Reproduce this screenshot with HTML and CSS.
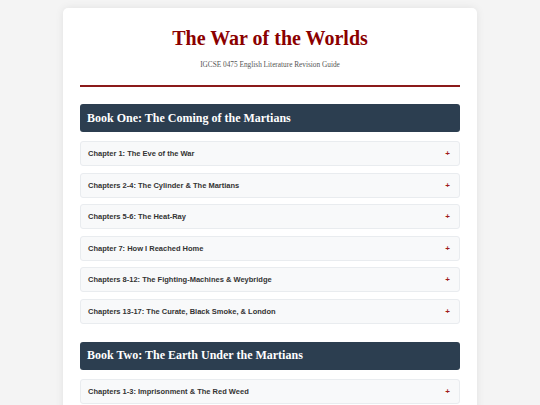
FILE: index.html
```html
<!DOCTYPE html>
<html lang="en">
<head>
<meta charset="utf-8">
<title>The War of the Worlds</title>
<link rel="stylesheet" href="styles.css">
</head>
<body>
<div class="card">
  <header class="masthead">
    <h1 class="title">The War of the Worlds</h1>
    <p class="subtitle">IGCSE 0475 English Literature Revision Guide</p>
  </header>
  <section class="book">
    <h2 class="book-title">Book One: The Coming of the Martians</h2>
    <div class="chapters">
      <div class="chapter"><span>Chapter 1: The Eve of the War</span><span class="plus">+</span></div>
      <div class="chapter"><span>Chapters 2-4: The Cylinder &amp; The Martians</span><span class="plus">+</span></div>
      <div class="chapter"><span>Chapters 5-6: The Heat-Ray</span><span class="plus">+</span></div>
      <div class="chapter"><span>Chapter 7: How I Reached Home</span><span class="plus">+</span></div>
      <div class="chapter"><span>Chapters 8-12: The Fighting-Machines &amp; Weybridge</span><span class="plus">+</span></div>
      <div class="chapter"><span>Chapters 13-17: The Curate, Black Smoke, &amp; London</span><span class="plus">+</span></div>
    </div>
  </section>
  <section class="book">
    <h2 class="book-title">Book Two: The Earth Under the Martians</h2>
    <div class="chapters">
      <div class="chapter"><span>Chapters 1-3: Imprisonment &amp; The Red Weed</span><span class="plus">+</span></div>
    </div>
  </section>
</div>
</body>
</html>
```
FILE: styles.css
```css
html, body { margin: 0; padding: 0; }
body {
  background: #f4f4f4;
  padding: 8px 0 0;
  height: 405px;
  overflow: hidden;
  box-sizing: border-box;
}
.card {
  width: 380px;
  margin: 0 auto;
  background: #fff;
  border-radius: 5px;
  padding: 17px 17px 20px;
  box-shadow: 0 0 8px rgba(0,0,0,0.08);
}
.masthead {
  text-align: center;
  border-bottom: 2px solid #8b1a1a;
  padding-bottom: 14px;
  margin-bottom: 17px;
}
.title {
  margin: 0;
  font-family: "Liberation Serif", Georgia, serif;
  font-weight: bold;
  font-size: 20px;
  line-height: 26px;
  color: #8b0000;
}
.subtitle {
  margin: 8px 0 0;
  font-family: "Liberation Serif", Georgia, serif;
  font-size: 7.3px;
  line-height: 12px;
  color: #555;
}
.book { margin-bottom: 18px; }
.book-title {
  margin: 0 0 9px;
  background: #2c3e50;
  color: #fff;
  border-radius: 3px;
  height: 28px;
  padding: 0 7px;
  display: flex;
  align-items: center;
  font-family: "Liberation Serif", Georgia, serif;
  font-weight: bold;
  font-size: 12px;
}
.chapters { display: flex; flex-direction: column; gap: 6.5px; }
.chapter {
  height: 23px;
  background: #f8f9fa;
  border: 1px solid #e9ecef;
  border-radius: 3px;
  padding: 0 9px 0 7px;
  display: flex;
  align-items: center;
  justify-content: space-between;
  font-family: "Liberation Sans", Arial, sans-serif;
  font-weight: bold;
  font-size: 7.5px;
  color: #333;
}
.plus {
  color: #a01c1c;
  font-size: 8px;
  font-weight: bold;
}
```
